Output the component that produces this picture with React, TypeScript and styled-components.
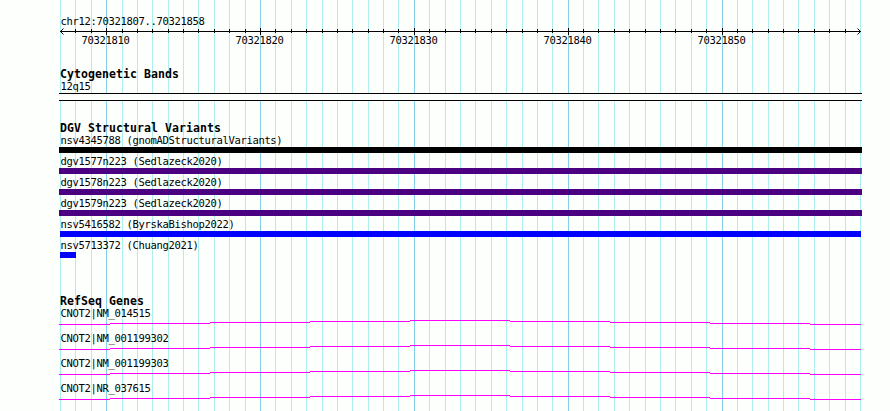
import React from "react";
import styled, { createGlobalStyle } from "styled-components";

const GlobalStyle = createGlobalStyle`
  body { margin: 0; background: #fdfffc; }
`;

const Browser = styled.main`
  position: relative;
  width: 890px;
  height: 411px;
  overflow: hidden;
  background: #fdfffc;
  color: #000;
  font-family: "DejaVu Sans Mono", "Liberation Mono", monospace;
`;

const GridLayer = styled.svg`
  position: absolute;
  inset: 0;
  display: block;
`;

const Content = styled.div`
  position: relative;
  display: flex;
  flex-direction: column;
  padding: 16px 0 0 59px;
`;

const Label = styled.div`
  height: 12px;
  padding-left: 1.4px;
  font-size: 10.5px;
  line-height: 11px;
  letter-spacing: -0.322px;
  white-space: pre;
`;

const Ruler = styled.svg`
  display: block;
  width: 831px;
  height: 22px;
  font-size: 10.5px;
  letter-spacing: -0.322px;
`;

const Track = styled.section<{ $gap: number }>`
  margin-top: ${(p) => p.$gap}px;
`;

const Heading = styled.h2`
  margin: 0;
  height: 12px;
  padding-left: 1px;
  font-size: 11.5px;
  line-height: 11px;
  font-weight: 700;
  letter-spacing: 0.077px;
  white-space: pre;
`;

const Band = styled.div`
  box-sizing: border-box;
  width: 803px;
  height: 8px;
  border: solid #000;
  border-width: 1px 0;
  background: #fdfffc;
`;

const Rows = styled.div<{ $gap: number }>`
  display: flex;
  flex-direction: column;
  gap: ${(p) => p.$gap}px;
`;

const Bar = styled.div<{ $color: string; $width: number; $inset: number }>`
  width: ${(p) => p.$width}px;
  height: 6px;
  margin-left: ${(p) => p.$inset}px;
  background: ${(p) => p.$color};
`;

const Intron = styled.svg`
  display: block;
  width: 803px;
  height: 6px;
`;

const START = 70321807;
const BASES = 52;
const ticks = Array.from({ length: BASES + 1 }, (_, i) => ({
  x: 60 + Math.round((i * 800) / BASES),
  pos: START + i,
  major: (START + i) % 10 === 0,
}));

const variants = [
  { name: "nsv4345788 (gnomADStructuralVariants)", color: "#000000", width: 803, inset: 0 },
  { name: "dgv1577n223 (Sedlazeck2020)", color: "#4b0082", width: 803, inset: 0 },
  { name: "dgv1578n223 (Sedlazeck2020)", color: "#4b0082", width: 803, inset: 0 },
  { name: "dgv1579n223 (Sedlazeck2020)", color: "#4b0082", width: 803, inset: 0 },
  { name: "nsv5416582 (ByrskaBishop2022)", color: "#0000ff", width: 801, inset: 1 },
  { name: "nsv5713372 (Chuang2021)", color: "#0000ff", width: 16, inset: 1 },
];

const genes = ["CNOT2|NM_014515", "CNOT2|NM_001199302", "CNOT2|NM_001199303", "CNOT2|NR_037615"];

const intronSteps = [
  [0, 51, 4],
  [51, 151, 3],
  [151, 251, 2],
  [251, 351, 1],
  [351, 451, 0],
  [451, 551, 1],
  [551, 651, 2],
  [651, 751, 3],
  [751, 802, 4],
];

function Grid() {
  return (
    <GridLayer width="890" height="411" shapeRendering="crispEdges">
      {ticks.map((t) => (
        <rect key={t.pos} x={t.x} y={0} width={1} height={411} fill={t.major ? "#87ceeb" : "#afeeee"} />
      ))}
    </GridLayer>
  );
}

function Scale() {
  return (
    <Ruler viewBox="59 28 831 22">
      <g shapeRendering="crispEdges">
        <rect x={60} y={31} width={801} height={1} />
        {ticks.slice(1, -1).map((t) => (
          <rect key={t.pos} x={t.x} y={t.major ? 28 : 29} width={1} height={t.major ? 7 : 4} />
        ))}
      </g>
      <path
        d="M63.5 28.5 60.5 31.5 63.5 34.5M857.5 28.5 860.5 31.5 857.5 34.5"
        fill="none"
        stroke="#000"
      />
      {ticks
        .filter((t) => t.major)
        .map((t) => (
          <text key={t.pos} x={t.x - 24.5} y={44}>
            {t.pos}
          </text>
        ))}
    </Ruler>
  );
}

export default function App() {
  return (
    <Browser>
      <GlobalStyle />
      <Grid />
      <Content>
        <Label>chr12:70321807..70321858</Label>
        <Scale />
        <Track $gap={19}>
          <Heading>Cytogenetic Bands</Heading>
          <Label>12q15</Label>
          <Band />
        </Track>
        <Track $gap={22}>
          <Heading>DGV Structural Variants</Heading>
          <Rows $gap={3}>
            {variants.map((v) => (
              <div key={v.name}>
                <Label>{v.name}</Label>
                <Bar $color={v.color} $width={v.width} $inset={v.inset} />
              </div>
            ))}
          </Rows>
        </Track>
        <Track $gap={38}>
          <Heading>RefSeq Genes</Heading>
          <Rows $gap={7}>
            {genes.map((g) => (
              <div key={g}>
                <Label>{g}</Label>
                <Intron viewBox="0 0 803 6" shapeRendering="crispEdges">
                  {intronSteps.map(([from, to, y]) => (
                    <rect key={from} x={from} y={y} width={to - from} height={1} fill="#ff00ff" />
                  ))}
                </Intron>
              </div>
            ))}
          </Rows>
        </Track>
      </Content>
    </Browser>
  );
}
